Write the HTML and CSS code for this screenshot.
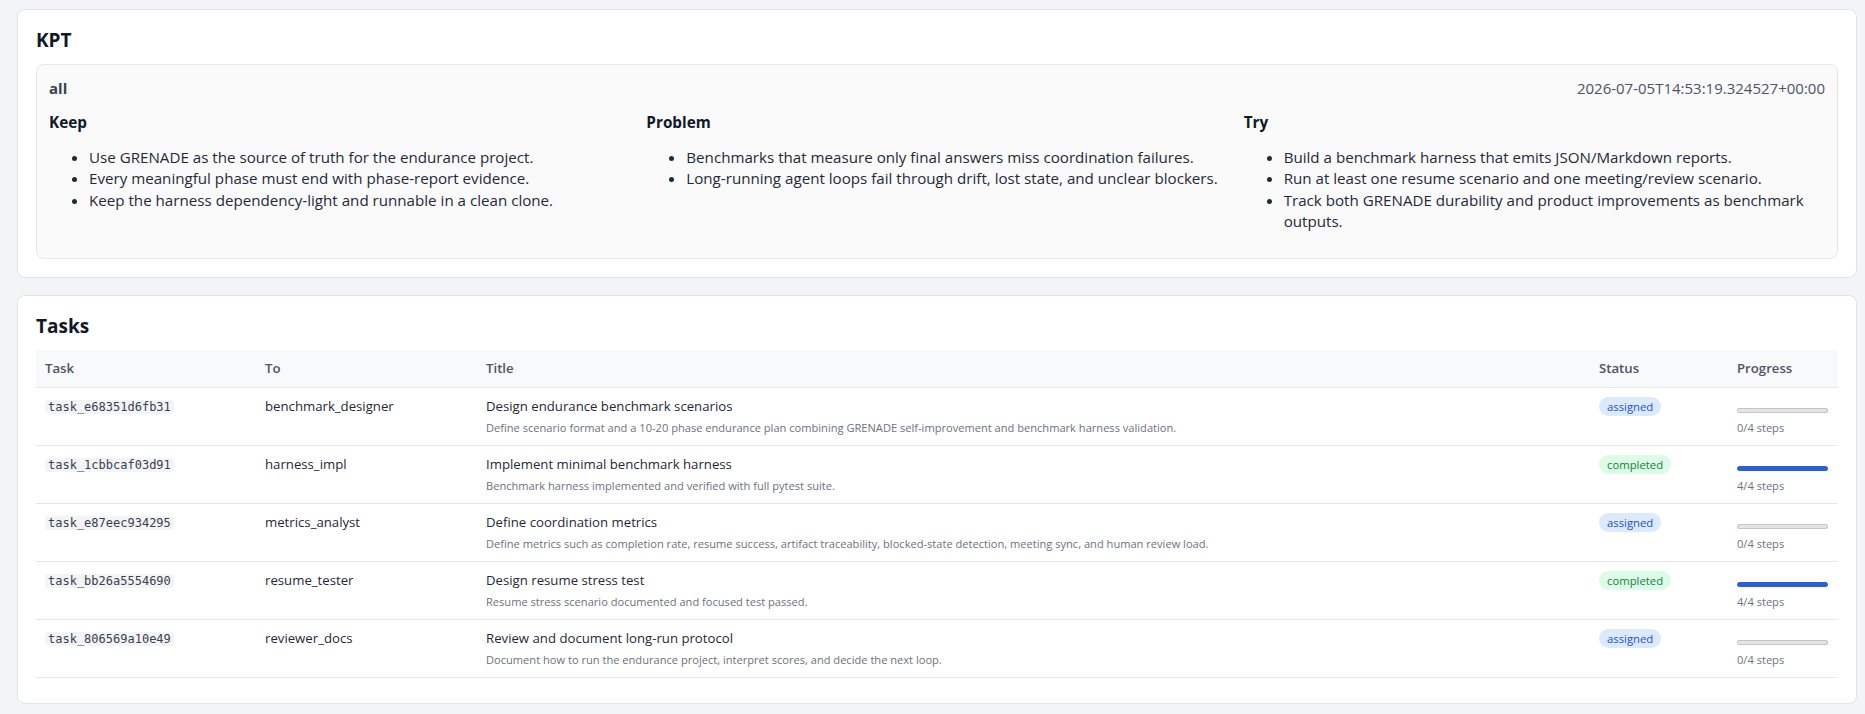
FILE: index.html
```html
<!DOCTYPE html>
<html lang="en">
<head>
<meta charset="utf-8">
<title>KPT · Tasks</title>
<link rel="stylesheet" href="styles.css">
</head>
<body>
<section class="card">
  <h2 class="card-title">KPT</h2>
  <div class="kpt">
    <div class="kpt-head">
      <span class="kpt-scope">all</span>
      <span class="kpt-time">2026-07-05T14:53:19.324527+00:00</span>
    </div>
    <div class="kpt-grid">
      <div class="kpt-col">
        <h4 class="kpt-label">Keep</h4>
        <ul class="kpt-list">
          <li>Use GRENADE as the source of truth for the endurance project.</li>
          <li>Every meaningful phase must end with phase-report evidence.</li>
          <li>Keep the harness dependency-light and runnable in a clean clone.</li>
        </ul>
      </div>
      <div class="kpt-col">
        <h4 class="kpt-label">Problem</h4>
        <ul class="kpt-list">
          <li>Benchmarks that measure only final answers miss coordination failures.</li>
          <li>Long-running agent loops fail through drift, lost state, and unclear blockers.</li>
        </ul>
      </div>
      <div class="kpt-col">
        <h4 class="kpt-label">Try</h4>
        <ul class="kpt-list">
          <li>Build a benchmark harness that emits JSON/Markdown reports.</li>
          <li>Run at least one resume scenario and one meeting/review scenario.</li>
          <li>Track both GRENADE durability and product improvements as benchmark outputs.</li>
        </ul>
      </div>
    </div>
  </div>
</section>

<section class="card">
  <h2 class="card-title">Tasks</h2>
  <div class="table-wrap">
    <table class="tasks">
      <thead>
        <tr>
          <th class="col-id">Task</th>
          <th class="col-to">To</th>
          <th class="col-title">Title</th>
          <th class="col-status">Status</th>
          <th class="col-progress">Progress</th>
        </tr>
      </thead>
      <tbody>
        <tr>
          <td><code class="tid">task_e68351d6fb31</code></td>
          <td><div class="cell-text">benchmark_designer</div></td>
          <td>
            <div class="cell-text">Design endurance benchmark scenarios</div>
            <div class="cell-sub">Define scenario format and a 10-20 phase endurance plan combining GRENADE self-improvement and benchmark harness validation.</div>
          </td>
          <td><span class="badge badge-assigned">assigned</span></td>
          <td>
            <div class="bar"><div class="bar-fill" style="width:0%"></div></div>
            <div class="cell-sub steps">0/4 steps</div>
          </td>
        </tr>
        <tr>
          <td><code class="tid">task_1cbbcaf03d91</code></td>
          <td><div class="cell-text">harness_impl</div></td>
          <td>
            <div class="cell-text">Implement minimal benchmark harness</div>
            <div class="cell-sub">Benchmark harness implemented and verified with full pytest suite.</div>
          </td>
          <td><span class="badge badge-completed">completed</span></td>
          <td>
            <div class="bar"><div class="bar-fill" style="width:100%"></div></div>
            <div class="cell-sub steps">4/4 steps</div>
          </td>
        </tr>
        <tr>
          <td><code class="tid">task_e87eec934295</code></td>
          <td><div class="cell-text">metrics_analyst</div></td>
          <td>
            <div class="cell-text">Define coordination metrics</div>
            <div class="cell-sub">Define metrics such as completion rate, resume success, artifact traceability, blocked-state detection, meeting sync, and human review load.</div>
          </td>
          <td><span class="badge badge-assigned">assigned</span></td>
          <td>
            <div class="bar"><div class="bar-fill" style="width:0%"></div></div>
            <div class="cell-sub steps">0/4 steps</div>
          </td>
        </tr>
        <tr>
          <td><code class="tid">task_bb26a5554690</code></td>
          <td><div class="cell-text">resume_tester</div></td>
          <td>
            <div class="cell-text">Design resume stress test</div>
            <div class="cell-sub">Resume stress scenario documented and focused test passed.</div>
          </td>
          <td><span class="badge badge-completed">completed</span></td>
          <td>
            <div class="bar"><div class="bar-fill" style="width:100%"></div></div>
            <div class="cell-sub steps">4/4 steps</div>
          </td>
        </tr>
        <tr>
          <td><code class="tid">task_806569a10e49</code></td>
          <td><div class="cell-text">reviewer_docs</div></td>
          <td>
            <div class="cell-text">Review and document long-run protocol</div>
            <div class="cell-sub">Document how to run the endurance project, interpret scores, and decide the next loop.</div>
          </td>
          <td><span class="badge badge-assigned">assigned</span></td>
          <td>
            <div class="bar"><div class="bar-fill" style="width:0%"></div></div>
            <div class="cell-sub steps">0/4 steps</div>
          </td>
        </tr>
      </tbody>
    </table>
  </div>
</section>
</body>
</html>
```

FILE: styles.css
```css
* {
  box-sizing: border-box;
}

html, body {
  margin: 0;
}

body {
  padding: 9px 8px 0 17px;
  background: #f3f4f6;
  color: #1f2937;
  font-family: "Open Sans", "Noto Sans", sans-serif;
  font-size: 15px;
}

/* Panels */
.card {
  background: #ffffff;
  border: 1px solid #dfe3e8;
  border-radius: 8px;
  padding: 18px;
  margin-bottom: 17px;
}

.card:last-child {
  margin-bottom: 0;
}

.card-title {
  margin: 0 0 11px;
  font-size: 19px;
  line-height: 25px;
  font-weight: 700;
  color: #111827;
}

/* KPT block */
.kpt {
  background: #fafafb;
  border: 1px solid #e5e7eb;
  border-radius: 8px;
  padding: 12px;
}

.kpt-head {
  display: flex;
  justify-content: space-between;
  align-items: baseline;
  line-height: 22px;
}

.kpt-scope {
  font-weight: 700;
  color: #374151;
}

.kpt-time {
  color: #4b5563;
}

.kpt-grid {
  display: grid;
  grid-template-columns: repeat(3, 1fr);
  gap: 16px;
  margin-top: 12px;
}

.kpt-label {
  margin: 0;
  font-size: 15.3px;
  line-height: 22px;
  font-weight: 700;
  color: #111827;
}

.kpt-list {
  margin: 14px 0 14px;
  padding-left: 40px;
  font-size: 15.15px;
  line-height: 21.33px;
  color: #1f2937;
}

/* Tasks table */
.table-wrap {
  padding-bottom: 7px;
}

.tasks {
  width: 100%;
  border-collapse: collapse;
  table-layout: fixed;
}

.col-id { width: 220px; }
.col-to { width: 221px; }
.col-status { width: 138px; }
.col-progress { width: 110px; }

.tasks th {
  text-align: left;
  background: #f8f9fa;
  color: #4b5563;
  font-size: 13.2px;
  font-weight: 600;
  line-height: 21px;
  padding: 8px 9px;
  border-bottom: 1px solid #e5e7eb;
}

.tasks td {
  vertical-align: top;
  padding: 8px 9px;
  border-bottom: 1px solid #e5e7eb;
  font-size: 13.2px;
  line-height: 20px;
}

.cell-text {
  color: #1f2937;
  line-height: 20px;
}

.cell-sub {
  margin-top: 3px;
  font-size: 11.1px;
  line-height: 18px;
  color: #6b7280;
}

.tid {
  display: block;
  width: fit-content;
  margin-top: 4px;
  padding: 0 3px;
  font-family: "DejaVu Sans Mono", "Liberation Mono", monospace;
  font-size: 12px;
  line-height: 14px;
  color: #374151;
  background: #f3f4f6;
  border-radius: 4px;
}

.badge {
  display: block;
  width: fit-content;
  margin-top: 1px;
  padding: 2px 8px;
  font-size: 11.3px;
  line-height: 15px;
  border-radius: 999px;
}

.badge-assigned {
  background: #dbeafe;
  color: #1d4ed8;
}

.badge-completed {
  background: #dcfce7;
  color: #15803d;
}

.bar {
  width: 91px;
  height: 5px;
  margin-top: 12px;
  border-radius: 3px;
  background: #e4e4e4;
  box-shadow: inset 0 0 0 1px #c6c6c6;
  overflow: hidden;
}

.bar-fill {
  height: 100%;
  background: #2b5fd9;
  border-radius: 3px;
}

.steps {
  margin-top: 6px;
}
```
